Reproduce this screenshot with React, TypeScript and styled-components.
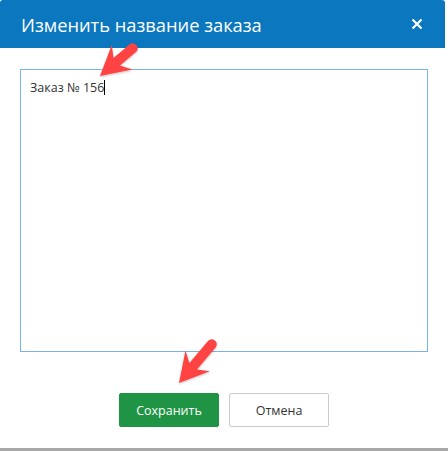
import styled, { createGlobalStyle } from "styled-components";

const GlobalStyle = createGlobalStyle`
  html, body {
    margin: 0;
    padding: 0;
    background: #ffffff;
    font-family: "Open Sans", "Noto Sans", sans-serif;
  }
`;

const Dialog = styled.div`
  position: relative;
  width: 448px;
  height: 451px;
  box-sizing: border-box;
  background: #ffffff;
  border-bottom: 3px solid #a8a8a8;
  display: flex;
  flex-direction: column;
`;

const Header = styled.div`
  height: 48px;
  margin-right: 3px;
  background: #0a77bf;
  border-radius: 3px 3px 0 0;
  display: flex;
  align-items: center;
  justify-content: space-between;
  padding: 0 22px 0 21px;
  color: #ffffff;
`;

const Title = styled.h1`
  margin: 0;
  font-size: 18.3px;
  font-weight: 400;
`;

const CloseButton = styled.button`
  border: none;
  background: none;
  padding: 0;
  width: 12px;
  height: 12px;
  display: flex;
  cursor: pointer;
`;

const Body = styled.div`
  padding: 21px 20px 0 20px;
  display: flex;
  flex-direction: column;
`;

const NameInput = styled.div`
  box-sizing: border-box;
  height: 283px;
  border: 1px solid #7ab3e3;
  padding: 9px 9px;
  font-size: 12.5px;
  color: #333333;
  line-height: 18px;
`;

const Caret = styled.span`
  display: inline-block;
  width: 1px;
  height: 15px;
  background: #000000;
  vertical-align: -3px;
`;

const Footer = styled.div`
  display: flex;
  justify-content: center;
  gap: 10px;
  margin-top: 41px;
`;

const Button = styled.button<{ primary?: boolean }>`
  width: 100px;
  height: 34px;
  border-radius: 2px;
  font-family: "Open Sans", sans-serif;
  font-size: 12.5px;
  cursor: pointer;
  border: 1px solid ${(p) => (p.primary ? "#1e9444" : "#cccccc")};
  background: ${(p) => (p.primary ? "#1e9444" : "#ffffff")};
  color: ${(p) => (p.primary ? "#ffffff" : "#333333")};
`;

const Overlay = styled.svg`
  position: absolute;
  left: 0;
  top: 0;
  pointer-events: none;
`;

type Pt = [number, number];

// red annotation arrow: tip point and tail point
const arrowPath = (tip: Pt, tail: Pt) => {
  const dx = tail[0] - tip[0];
  const dy = tail[1] - tip[1];
  const len = Math.hypot(dx, dy);
  const ux = dx / len;
  const uy = dy / len;
  const nx = -uy;
  const ny = ux;
  const headLen = 27;
  const headHalf = 16;
  const shaftHalf = 5;
  const bx = tip[0] + ux * headLen;
  const by = tip[1] + uy * headLen;
  const notch = 5;
  const p = (x: number, y: number) => `${x.toFixed(1)},${y.toFixed(1)}`;
  return [
    `M${p(tip[0], tip[1])}`,
    `L${p(bx + nx * headHalf + ux * 2, by + ny * headHalf + uy * 2)}`,
    `L${p(bx + nx * shaftHalf - ux * notch, by + ny * shaftHalf - uy * notch)}`,
    `L${p(tail[0] + nx * shaftHalf, tail[1] + ny * shaftHalf)}`,
    `A${shaftHalf},${shaftHalf} 0 0 0 ${p(tail[0] - nx * shaftHalf, tail[1] - ny * shaftHalf)}`,
    `L${p(bx - nx * shaftHalf - ux * notch, by - ny * shaftHalf - uy * notch)}`,
    `L${p(bx - nx * headHalf + ux * 2, by - ny * headHalf + uy * 2)}`,
    "Z",
  ].join(" ");
};

const App = () => {
  return (
    <Dialog>
      <GlobalStyle />
      <Header>
        <Title>Изменить название заказа</Title>
        <CloseButton aria-label="Закрыть">
          <svg width="12" height="12" viewBox="0 0 12 12">
            <path
              d="M1.5 1.5 L10.5 10.5 M10.5 1.5 L1.5 10.5"
              stroke="#ffffff"
              strokeWidth="2.2"
            />
          </svg>
        </CloseButton>
      </Header>
      <Body>
        <NameInput>
          Заказ № 156
          <Caret />
        </NameInput>
        <Footer>
          <Button primary>Сохранить</Button>
          <Button>Отмена</Button>
        </Footer>
      </Body>
      <Overlay width="448" height="451">
        <defs>
          <filter id="shadow" x="-20%" y="-20%" width="140%" height="140%">
            <feDropShadow dx="0" dy="1" stdDeviation="1" floodColor="#000" floodOpacity="0.25" />
          </filter>
        </defs>
        <path d={arrowPath([100, 76], [133, 48])} fill="#ff4242" filter="url(#shadow)" />
        <path d={arrowPath([179, 383], [212, 344])} fill="#ff4242" filter="url(#shadow)" />
      </Overlay>
    </Dialog>
  );
};

export default App;
